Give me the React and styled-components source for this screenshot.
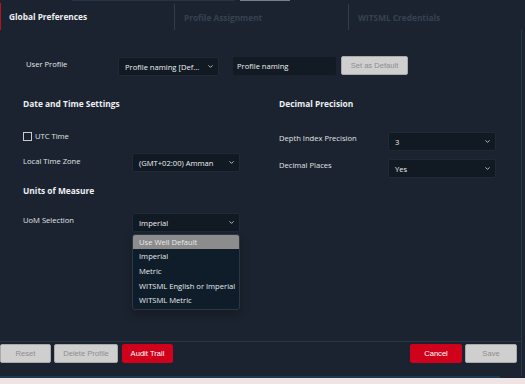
import React from "react";
import styled, { createGlobalStyle } from "styled-components";
import { ChevronDown } from "lucide-react";

const GlobalStyle = createGlobalStyle`
  html, body {
    margin: 0;
    padding: 0;
    background: #1b2330;
  }
  body {
    font-family: "Open Sans", "Noto Sans", sans-serif;
    color: #e4e7ea;
  }
`;

const Page = styled.div`
  width: 525px;
  height: 384px;
  display: flex;
  flex-direction: column;
  background: #1b2330;
  overflow: hidden;
`;

const TopStrip = styled.div`
  height: 3px;
  flex-shrink: 0;
  display: flex;
  gap: 5px;
  padding-left: 72px;
  span {
    display: block;
    height: 1px;
  }
  span:first-child {
    width: 163px;
    background: #243446;
  }
  span:last-child {
    width: 50px;
    background: #7a7f86;
  }
`;

const Tabs = styled.div`
  display: flex;
  height: 27px;
  flex-shrink: 0;
`;

const Tab = styled.div`
  width: 174px;
  display: flex;
  align-items: center;
  padding-left: ${(p) => (p.$active ? "8px" : "9px")};
  box-sizing: border-box;
  border-left: ${(p) =>
    p.$active ? "1px solid #b3141e" : "1px solid #323d4a"};
  font-size: 8.3px;
  font-weight: 700;
  color: ${(p) => (p.$active ? "#eef0f2" : "#364252")};
  margin-top: ${(p) => (p.$active ? "0" : "1px")};
`;

const Body = styled.div`
  flex: 1;
  min-height: 0;
  width: 521px;
  border-right: 1px solid #26384a;
  display: flex;
  flex-direction: column;
  position: relative;
`;

const ProfileRow = styled.div`
  display: flex;
  align-items: center;
  padding: 26px 0 0 26px;
  height: 19px;
`;

const ProfileLabel = styled.div`
  width: 92px;
  font-size: 7.6px;
  margin-top: -4px;
`;

const Select = styled.div`
  width: ${(p) => p.$w || 108}px;
  height: 19px;
  box-sizing: border-box;
  background: #111922;
  border: 1px solid #1e2a36;
  border-radius: 2px;
  display: flex;
  align-items: center;
  justify-content: space-between;
  padding: 0 4px 0 6px;
  font-size: 7.6px;
  color: #eef0f2;
  margin-top: ${(p) => p.$mt || 0}px;
  svg {
    color: #c8ccd0;
  }
`;

const TextInput = styled.div`
  width: 103px;
  height: 18px;
  box-sizing: border-box;
  margin-left: 14px;
  background: #121a23;
  border-radius: 2px;
  display: flex;
  align-items: center;
  padding-left: 4px;
  font-size: 7.6px;
  color: #eef0f2;
`;

const GrayButton = styled.div`
  height: ${(p) => p.$h || 19}px;
  width: ${(p) => p.$w}px;
  box-sizing: border-box;
  background: #cfcfcf;
  border: 1px solid #a9a9a9;
  border-radius: 2px;
  display: flex;
  align-items: center;
  justify-content: center;
  font-family: "Liberation Sans", Arial, sans-serif;
  font-size: 7.6px;
  color: #8e8e8e;
  margin-left: ${(p) => p.$ml || 0}px;
`;

const RedButton = styled(GrayButton)`
  background: #d0021b;
  border-color: #d0021b;
  color: #ffffff;
`;

const Columns = styled.div`
  display: grid;
  grid-template-columns: 256px 240px;
  padding: 22px 0 0 23px;
`;

const Column = styled.div`
  display: flex;
  flex-direction: column;
`;

const Heading = styled.div`
  font-size: 8.4px;
  font-weight: 700;
  height: 13px;
  line-height: 13px;
  color: #eef0f2;
  margin-top: ${(p) => p.$mt || 0}px;
`;

const FieldRow = styled.div`
  display: grid;
  grid-template-columns: 109px 108px;
  align-items: start;
  margin-top: ${(p) => p.$mt || 0}px;
  position: relative;
`;

const Label = styled.div`
  font-size: 7.6px;
  line-height: 10px;
  color: #e0e3e6;
  padding-top: ${(p) => p.$pt ?? 2}px;
`;

const CheckRow = styled.div`
  display: flex;
  align-items: center;
  gap: 3px;
  margin-top: 21px;
  font-size: 7.6px;
  color: #e0e3e6;
`;

const Box = styled.span`
  width: 7px;
  height: 7px;
  border: 1px solid #c8ccd0;
  display: inline-block;
`;

const Menu = styled.div`
  position: absolute;
  left: 109px;
  top: 21px;
  width: 108px;
  box-sizing: border-box;
  background: #0f1d2a;
  border: 1px solid #2b3744;
  border-radius: 3px;
  padding: 0 0 1px;
  box-shadow: 0 4px 10px rgba(0, 0, 0, 0.25);
  z-index: 5;
`;

const MenuItem = styled.div`
  height: ${(p) => (p.$selected ? 14 : 14.8)}px;
  line-height: ${(p) => (p.$selected ? 14 : 14.8)}px;
  padding-left: 6px;
  font-size: 7.6px;
  color: #e6e9ec;
  white-space: nowrap;
  background: ${(p) => (p.$selected ? "#8c8c8c" : "transparent")};
  border-radius: ${(p) => (p.$selected ? "2px 2px 0 0" : "0")};
`;

const Footer = styled.div`
  margin-top: auto;
  border-top: 1px solid #2a3542;
  padding: 2px 4px 13px 0;
  display: flex;
  align-items: center;
`;

const Spacer = styled.div`
  flex: 1;
`;

const BottomBand = styled.div`
  height: 2px;
  flex-shrink: 0;
  background: #1d3a52;
  width: 500px;
`;

const Paper = styled.div`
  height: 6px;
  flex-shrink: 0;
  background: #efe3e3;
`;

const Chevron = () => <ChevronDown size={7} strokeWidth={3} />;

const uomOptions = [
  "Use Well Default",
  "Imperial",
  "Metric",
  "WITSML English or Imperial",
  "WITSML Metric",
];

export default function App() {
  return (
    <Page>
      <GlobalStyle />
      <TopStrip>
        <span />
        <span />
      </TopStrip>
      <Tabs>
        <Tab $active>Global Preferences</Tab>
        <Tab>Profile Assignment</Tab>
        <Tab>WITSML Credentials</Tab>
      </Tabs>
      <Body>
        <ProfileRow>
          <ProfileLabel>User Profile</ProfileLabel>
          <Select $w={101} $mt={2}>
            <span>Profile naming [Def...</span>
            <Chevron />
          </Select>
          <TextInput>Profile naming</TextInput>
          <GrayButton $w={67} $ml={5} $h={19}>
            Set as Default
          </GrayButton>
        </ProfileRow>

        <Columns>
          <Column>
            <Heading>Date and Time Settings</Heading>
            <CheckRow>
              <Box />
              UTC Time
            </CheckRow>
            <FieldRow $mt={12}>
              <Label $pt={3}>Local Time Zone</Label>
              <Select>
                <span>(GMT+02:00) Amman</span>
                <Chevron />
              </Select>
            </FieldRow>
            <Heading $mt={12}>Units of Measure</Heading>
            <FieldRow $mt={16}>
              <Label $pt={2}>UoM Selection</Label>
              <Select>
                <span>Imperial</span>
                <Chevron />
              </Select>
              <Menu>
                {uomOptions.map((o, i) => (
                  <MenuItem key={o} $selected={i === 0}>
                    {o}
                  </MenuItem>
                ))}
              </Menu>
            </FieldRow>
          </Column>
          <Column>
            <Heading>Decimal Precision</Heading>
            <FieldRow $mt={22}>
              <Label $pt={1}>Depth Index Precision</Label>
              <Select>
                <span>3</span>
                <Chevron />
              </Select>
            </FieldRow>
            <FieldRow $mt={8}>
              <Label $pt={1}>Decimal Places</Label>
              <Select>
                <span>Yes</span>
                <Chevron />
              </Select>
            </FieldRow>
          </Column>
        </Columns>

        <Footer>
          <GrayButton $w={51}>Reset</GrayButton>
          <GrayButton $w={64} $ml={3}>
            Delete Profile
          </GrayButton>
          <RedButton $w={51} $ml={4}>
            Audit Trail
          </RedButton>
          <Spacer />
          <RedButton $w={52}>Cancel</RedButton>
          <GrayButton $w={52} $ml={3}>
            Save
          </GrayButton>
        </Footer>
      </Body>
      <BottomBand />
      <Paper />
    </Page>
  );
}
